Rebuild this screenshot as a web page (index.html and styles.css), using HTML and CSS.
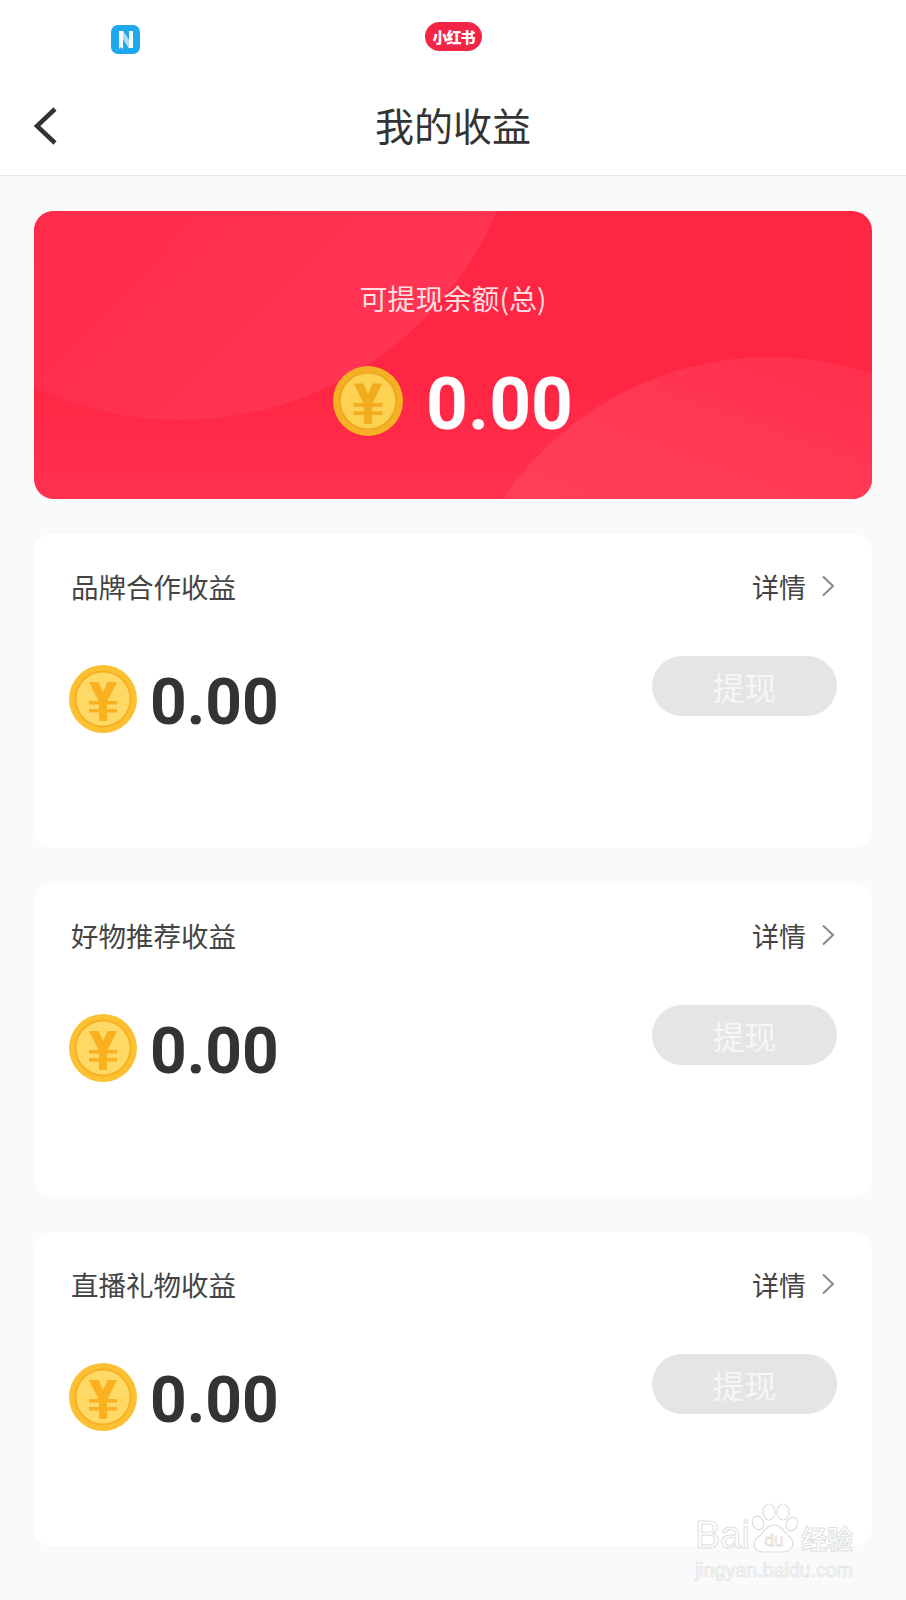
FILE: index.html
```html
<!DOCTYPE html>
<html lang="zh-CN">
<head>
    <meta charset="UTF-8">
    <meta name="viewport" content="width=device-width, initial-scale=1.0">
    <title>我的收益</title>
    <link rel="stylesheet" href="styles.css">
</head>
<body>
    <svg class="defs" width="0" height="0">
        <symbol id="coin" viewBox="0 0 68 68">
            <circle cx="34" cy="34" r="34" class="coin-outer"/>
            <circle cx="34" cy="34" r="28.5" class="coin-ring"/>
            <circle cx="34" cy="34" r="26.5" class="coin-inner"/>
            <path d="M20 17 H29.5 L34 27 L38.5 17 H48 L38 37 V56 H30 V37 Z" class="coin-mark"/>
            <path d="M20 36 H48 V39.5 H20 Z M20 44 H48 V47.5 H20 Z" class="coin-mark"/>
        </symbol>
    </svg>

    <div class="status-bar">
        <svg class="app-note" viewBox="0 0 29 29">
            <rect width="29" height="29" rx="7" fill="#1ea9ee"/>
            <path d="M8 6 H12 L18 15 V6 H22 V23 H18 L12 14 V24 L10 22 L8 24 Z" fill="#fff"/>
            <path d="M12 6 L18 15 V23 L12 14 Z" fill="#a9dcf8"/>
        </svg>
        <span class="app-red">小红书</span>
    </div>

    <header class="nav">
        <svg class="back" viewBox="0 0 24 38">
            <path d="M22 2 L4 19 L22 36" fill="none" stroke="#333" stroke-width="4.5"/>
        </svg>
        <h1>我的收益</h1>
    </header>

    <main class="content">
        <section class="hero">
            <div class="blob blob-left"></div>
            <div class="blob blob-right"></div>
            <p class="hero-label">可提现余额(总)</p>
            <div class="hero-amount">
                <svg class="coin coin-dark"><use href="#coin"/></svg>
                <span>0.00</span>
            </div>
        </section>

        <section class="card">
            <div class="card-head">
                <span class="card-title">品牌合作收益</span>
                <a class="detail">详情
                    <svg class="arrow" viewBox="0 0 14 22"><path d="M2 1.5 L12 11 L2 20.5" fill="none" stroke="#888" stroke-width="2"/></svg>
                </a>
            </div>
            <div class="card-row">
                <div class="amount">
                    <svg class="coin"><use href="#coin"/></svg>
                    <span>0.00</span>
                </div>
                <button class="withdraw">提现</button>
            </div>
        </section>

        <section class="card">
            <div class="card-head">
                <span class="card-title">好物推荐收益</span>
                <a class="detail">详情
                    <svg class="arrow" viewBox="0 0 14 22"><path d="M2 1.5 L12 11 L2 20.5" fill="none" stroke="#888" stroke-width="2"/></svg>
                </a>
            </div>
            <div class="card-row">
                <div class="amount">
                    <svg class="coin"><use href="#coin"/></svg>
                    <span>0.00</span>
                </div>
                <button class="withdraw">提现</button>
            </div>
        </section>

        <section class="card">
            <div class="card-head">
                <span class="card-title">直播礼物收益</span>
                <a class="detail">详情
                    <svg class="arrow" viewBox="0 0 14 22"><path d="M2 1.5 L12 11 L2 20.5" fill="none" stroke="#888" stroke-width="2"/></svg>
                </a>
            </div>
            <div class="card-row">
                <div class="amount">
                    <svg class="coin"><use href="#coin"/></svg>
                    <span>0.00</span>
                </div>
                <button class="withdraw">提现</button>
            </div>
        </section>
    </main>

    <div class="watermark">
        <div class="wm-top">
            <span class="wm-bai">Bai</span>
            <svg class="wm-paw" viewBox="0 0 48 50">
                <g fill="#fff" fill-opacity="0.6" stroke="#ddd" stroke-width="1.2">
                    <ellipse cx="8" cy="20" rx="5.5" ry="7" transform="rotate(-25 8 20)"/>
                    <ellipse cx="19" cy="9" rx="6" ry="8"/>
                    <ellipse cx="33" cy="9" rx="6" ry="8"/>
                    <ellipse cx="42" cy="21" rx="5.5" ry="7" transform="rotate(25 42 21)"/>
                    <path d="M24 22 C32 22 34 30 40 34 C46 40 42 49 33 49 H13 C4 49 1 40 8 34 C14 30 16 22 24 22 Z"/>
                </g>
                <text x="24" y="43" text-anchor="middle" class="wm-du">du</text>
            </svg>
            <span class="wm-cn">经验</span>
        </div>
        <div class="wm-url">jingyan.baidu.com</div>
    </div>
</body>
</html>
```

FILE: styles.css
```css
* {
    box-sizing: border-box;
}
html, body {
    margin: 0;
    padding: 0;
}
body {
    position: relative;
    width: 906px;
    height: 1600px;
    overflow: hidden;
    background-color: #fafafa;
    font-family: "Noto Sans CJK SC", "Noto Sans", sans-serif;
    color: #333;
}
.defs {
    display: block;
    height: 0;
}
.status-bar {
    display: flex;
    align-items: flex-start;
    height: 70px;
    padding: 22px 0 0 111px;
    background-color: #fff;
}
.app-note {
    width: 29px;
    height: 29px;
    margin-top: 3px;
}
.app-red {
    width: 57px;
    height: 29px;
    margin-left: 285px;
    border-radius: 15px;
    background-color: #f32445;
    color: #fff;
    font-size: 15px;
    font-weight: 900;
    line-height: 29px;
    text-align: center;
    letter-spacing: -1px;
}
.nav {
    display: flex;
    align-items: center;
    justify-content: center;
    position: relative;
    height: 106px;
    background-color: #fff;
    border-bottom: 1px solid #e9e9e9;
}
.nav h1 {
    margin: 2px 0 0;
    font-size: 39px;
    font-weight: 400;
    color: #333;
}
.back {
    position: absolute;
    left: 33px;
    top: 37px;
    width: 24px;
    height: 38px;
}
.content {
    display: flex;
    flex-direction: column;
    gap: 35px;
    padding: 35px 34px 0;
}
.hero {
    position: relative;
    height: 288px;
    overflow: hidden;
    border-radius: 20px;
    background: linear-gradient(180deg, #ff2643 60%, #ff3150 100%);
    text-align: center;
}
.blob {
    position: absolute;
    border-radius: 50%;
}
.blob-left {
    left: -199px;
    top: -481px;
    width: 690px;
    height: 690px;
    background: linear-gradient(135deg, #ff2b48 45%, #ff3553 85%);
}
.blob-right {
    left: 414px;
    top: 146px;
    width: 644px;
    height: 644px;
    background: linear-gradient(200deg, #ff2d49 5%, #ff3b56 30%, #ff4059 45%);
}
.hero-label {
    position: relative;
    margin: 0;
    padding-top: 65px;
    font-size: 28px;
    line-height: 44px;
    color: rgba(255, 255, 255, 0.85);
}
.hero-amount {
    position: relative;
    display: flex;
    align-items: center;
    justify-content: center;
    gap: 23px;
    margin-top: 46px;
    font-family: Roboto, sans-serif;
    font-size: 73px;
    font-weight: 700;
    line-height: 64px;
    color: #fff;
}
.hero-amount span {
    padding-top: 6px;
}
.coin {
    flex: none;
    width: 68px;
    height: 68px;
    --outer: #fcc033;
    --ring: #f9b023;
    --inner: #ffd966;
    --mark: #fbb020;
}
.coin-dark {
    width: 70px;
    height: 70px;
    --outer: #f6b023;
    --ring: #eeaa20;
    --inner: #fdd151;
    --mark: #f3ab1f;
}
.coin-outer {
    fill: var(--outer);
}
.coin-ring {
    fill: var(--ring);
}
.coin-inner {
    fill: var(--inner);
}
.coin-mark {
    fill: var(--mark);
}
.card {
    height: 314px;
    padding: 32px 35px 0 37px;
    border-radius: 18px;
    background-color: #fff;
}
.card-head {
    display: flex;
    align-items: center;
    justify-content: space-between;
    height: 40px;
    margin-bottom: 50px;
}
.card-title {
    font-size: 27.5px;
    color: #444;
}
.detail {
    display: flex;
    align-items: center;
    gap: 15px;
    font-size: 27px;
    color: #444;
}
.arrow {
    width: 14px;
    height: 22px;
    margin-right: 2px;
}
.card-row {
    display: flex;
    align-items: flex-start;
    justify-content: space-between;
}
.amount {
    display: flex;
    align-items: center;
    gap: 13px;
    margin: 9px 0 0 -2px;
    font-family: Roboto, sans-serif;
    font-size: 64px;
    font-weight: 700;
    line-height: 60px;
    color: #333;
}
.amount span {
    padding-top: 8px;
}
.withdraw {
    width: 185px;
    height: 60px;
    padding: 0;
    border: none;
    border-radius: 30px;
    background-color: #e5e5e5;
    color: #f6f6f6;
    font-family: inherit;
    font-size: 32px;
}
.watermark {
    position: absolute;
    left: 695px;
    top: 1503px;
    width: 165px;
    color: rgba(255, 255, 255, 0.5);
    -webkit-text-stroke: 1px #e0e0e0;
}
.wm-top {
    display: flex;
    align-items: flex-end;
    height: 50px;
}
.wm-bai {
    width: 55px;
    font-family: "Liberation Sans", sans-serif;
    font-size: 38px;
    line-height: 36px;
}
.wm-paw {
    width: 48px;
    height: 50px;
}
.wm-cn {
    margin-left: 3px;
    font-size: 26px;
    font-weight: 700;
    line-height: 30px;
}
.wm-du {
    font-family: "Liberation Sans", sans-serif;
    font-size: 17px;
    fill: none;
    stroke: #ddd;
    stroke-width: 0.8;
}
.wm-url {
    margin-top: 4px;
    font-family: "Liberation Sans", sans-serif;
    font-size: 19.6px;
    line-height: 26px;
    white-space: nowrap;
    -webkit-text-stroke-width: 0.7px;
}
```
